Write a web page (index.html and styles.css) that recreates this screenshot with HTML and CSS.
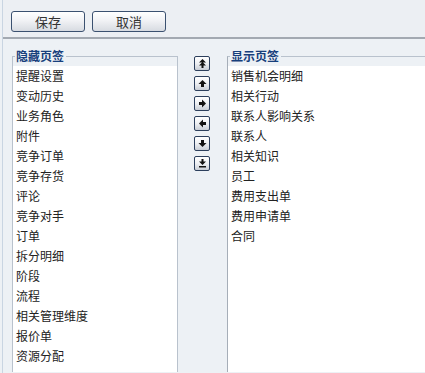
FILE: index.html
```html
<!DOCTYPE html>
<html lang="zh-CN">
<head>
    <meta charset="UTF-8">
    <meta name="viewport" content="width=device-width, initial-scale=1.0">
    <title>页签设置</title>
    <link rel="stylesheet" href="styles.css">
</head>
<body>
    <div class="page">
        <div class="toolbar">
            <button type="button" class="btn">保存</button>
            <button type="button" class="btn">取消</button>
        </div>
        <div class="editor">
            <fieldset class="group group-hidden">
                <legend>隐藏页签</legend>
                <ul class="tab-list">
                    <li>提醒设置</li>
                    <li>变动历史</li>
                    <li>业务角色</li>
                    <li>附件</li>
                    <li>竞争订单</li>
                    <li>竞争存货</li>
                    <li>评论</li>
                    <li>竞争对手</li>
                    <li>订单</li>
                    <li>拆分明细</li>
                    <li>阶段</li>
                    <li>流程</li>
                    <li>相关管理维度</li>
                    <li>报价单</li>
                    <li>资源分配</li>
                </ul>
            </fieldset>
            <div class="movers">
                <button type="button" class="mover" title="置顶">
                    <svg width="9" height="9" viewBox="0 0 9 9"><path d="M4.5 0L8 3.5H1z M4.5 3L8 6.5H5.5V9h-2V6.5H1z" fill="#111"/></svg>
                </button>
                <button type="button" class="mover" title="上移">
                    <svg width="9" height="9" viewBox="0 0 9 9"><path d="M4.5 1L8.5 5H6v3H3V5H0.5z" fill="#111"/></svg>
                </button>
                <button type="button" class="mover" title="显示">
                    <svg width="9" height="9" viewBox="0 0 9 9"><path d="M8 4.5L4 8.5V6H1V3h3V0.5z" fill="#111"/></svg>
                </button>
                <button type="button" class="mover" title="隐藏">
                    <svg width="9" height="9" viewBox="0 0 9 9"><path d="M1 4.5L5 0.5V3h3v3H5v2.5z" fill="#111"/></svg>
                </button>
                <button type="button" class="mover" title="下移">
                    <svg width="9" height="9" viewBox="0 0 9 9"><path d="M4.5 8L0.5 4H3V1h3v3h2.5z" fill="#111"/></svg>
                </button>
                <button type="button" class="mover" title="置底">
                    <svg width="9" height="9" viewBox="0 0 9 9"><path d="M4.5 6L1 2.5h2.5V0h2v2.5H8z M1 7h7v1.5H1z" fill="#111"/></svg>
                </button>
            </div>
            <fieldset class="group group-shown">
                <legend>显示页签</legend>
                <ul class="tab-list">
                    <li>销售机会明细</li>
                    <li>相关行动</li>
                    <li>联系人影响关系</li>
                    <li>联系人</li>
                    <li>相关知识</li>
                    <li>员工</li>
                    <li>费用支出单</li>
                    <li>费用申请单</li>
                    <li>合同</li>
                </ul>
            </fieldset>
        </div>
    </div>
</body>
</html>
```

FILE: styles.css
```css
html, body {
    margin: 0;
    padding: 0;
    height: 100%;
    overflow: hidden;
}
body {
    font-family: "Noto Sans CJK SC", "Liberation Sans", sans-serif;
    font-size: 12px;
    color: #222;
    background-color: #edf1f5;
}
.page {
    height: 100%;
    border-left: 1px solid #c9d5e2;
    margin-left: 2px;
}
.toolbar {
    height: 39px;
    background-color: #eceff3;
    border-bottom: 2px solid #a3a9b1;
    display: flex;
    gap: 7px;
    padding: 11px 0 0 8px;
    box-sizing: border-box;
}
.btn {
    width: 74px;
    height: 21px;
    padding: 0;
    font-family: inherit;
    font-size: 13px;
    line-height: 19px;
    color: #333;
    border: 1px solid #3b5170;
    border-radius: 3px;
    background: linear-gradient(#ffffff, #f1f2f5 45%, #d7dbe1);
    cursor: pointer;
}
.editor {
    display: flex;
    align-items: flex-start;
    padding: 9px 0 0 9px;
}
.group {
    margin: 0;
    padding: 0;
    border: 1px solid #b9c2cd;
    border-bottom: none;
    min-width: 0;
}
.group legend {
    margin-left: 2px;
    padding: 0 2px 0 1px;
    font-weight: bold;
    color: #173f7c;
    line-height: 16px;
}
.group-hidden {
    width: 164px;
}
.group-shown {
    flex: 1;
    border-right: none;
    border-left-color: #a6aeb8;
}
.tab-list {
    list-style: none;
    margin: 2px 0 0;
    padding: 0 3px;
    height: 306px;
    background-color: #fff;
}
.tab-list li {
    height: 20px;
    line-height: 20px;
    white-space: nowrap;
}
.movers {
    width: 16px;
    margin: 8px 17px 0 16px;
    display: flex;
    flex-direction: column;
    gap: 5px;
}
.mover {
    width: 16px;
    height: 15px;
    padding: 0;
    display: flex;
    align-items: center;
    justify-content: center;
    border: 1px solid #2c3f5c;
    border-radius: 2px;
    background: linear-gradient(#ffffff, #eef0f3 50%, #c9ced6);
    cursor: pointer;
}
```
